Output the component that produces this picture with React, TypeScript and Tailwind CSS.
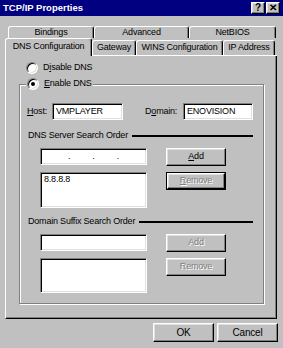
import type { ReactNode } from "react";

const raised =
  "border border-t-white border-l-white border-r-black border-b-black shadow-[inset_-1px_-1px_0_#808080,inset_1px_1px_0_#dfdfdf]";
const sunken =
  "border border-t-[#808080] border-l-[#808080] border-r-white border-b-white shadow-[inset_1px_1px_0_#000,inset_-1px_-1px_0_#dfdfdf] bg-white";
const disabledText = "text-[#808080] [text-shadow:1px_1px_0_#fff]";

function Btn({
  children,
  disabled,
  isDefault,
  className = "",
}: {
  children: ReactNode;
  disabled?: boolean;
  isDefault?: boolean;
  className?: string;
}) {
  const inner = (
    <div
      className={`flex h-full w-full items-center justify-center ${raised} ${
        disabled ? disabledText : ""
      }`}
    >
      {children}
    </div>
  );
  if (isDefault) {
    return <div className={`border border-black ${className}`}>{inner}</div>;
  }
  return <div className={className}>{inner}</div>;
}

function Radio({ checked }: { checked?: boolean }) {
  return (
    <div className="flex h-[12px] w-[12px] items-center justify-center rounded-full border border-t-[#808080] border-l-[#808080] border-r-white border-b-white bg-white shadow-[inset_1px_1px_0_#000,inset_-1px_-1px_0_#dfdfdf]">
      {checked ? <div className="h-[4px] w-[4px] rounded-full bg-black" /> : null}
    </div>
  );
}

function Tab({
  label,
  width,
  selected,
  back,
}: {
  label: string;
  width: string;
  selected?: boolean;
  back?: boolean;
}) {
  const base =
    "flex items-center justify-center rounded-t-[3px] border-l border-t border-r border-l-white border-t-white border-r-black shadow-[inset_-1px_0_0_#808080]";
  if (back) {
    return <div className={`${base} ${width} h-[12px] pt-[1px]`}>{label}</div>;
  }
  if (selected) {
    return <div className={`${base} ${width} h-[18px] pb-[2px]`}>{label}</div>;
  }
  return (
    <div className={`flex ${width} h-[16px] flex-col`}>
      <div className={`${base} flex-1`}>{label}</div>
      <div className="h-[1px] bg-white" />
    </div>
  );
}

function SectionLabel({ text }: { text: string }) {
  return (
    <div className="ml-[8px] mr-[10px] flex h-[12px] items-center">
      <span>{text}</span>
      <div className="ml-[4px] h-[2px] flex-1 bg-black" />
    </div>
  );
}

export default function App() {
  return (
    <div className="flex h-[348px] w-[283px] flex-col overflow-hidden bg-[#c0c0c0] font-['Liberation_Sans',Arial,sans-serif] text-[9px] tracking-[-0.2px] text-black">
      {/* title bar */}
      <div className="flex h-[16px] items-center justify-between bg-[#000080] pl-[3px] pr-[3px]">
        <span className="text-[9.5px] font-bold tracking-normal text-white">
          TCP/IP Properties
        </span>
        <div className="flex gap-[1px]">
          <div className={`flex h-[12px] w-[14px] items-center justify-center bg-[#c0c0c0] text-[10px] font-bold leading-none ${raised}`}>
            ?
          </div>
          <div className={`flex h-[12px] w-[14px] items-center justify-center bg-[#c0c0c0] text-[10px] font-bold leading-none ${raised}`}>
            ✕
          </div>
        </div>
      </div>

      {/* tabs */}
      <div className="ml-[5px] mt-[10px] w-[272px]">
        <div className="flex pl-[3px]">
          <Tab back label="Bindings" width="w-[86px]" />
          <Tab back label="Advanced" width="w-[95px]" />
          <Tab back label="NetBIOS" width="w-[87px]" />
        </div>
        <div className="flex items-end">
          <Tab selected label="DNS Configuration" width="w-[87px]" />
          <Tab label="Gateway" width="w-[44px]" />
          <Tab label="WINS Configuration" width="w-[87px]" />
          <Tab label="IP Address" width="w-[52px]" />
          <div className="h-[1px] flex-1 bg-white" />
        </div>

        {/* panel */}
        <div className="flex h-[263px] flex-col border-b border-l border-r border-b-black border-l-white border-r-black shadow-[inset_-1px_-1px_0_#808080]">
          <div className="mt-[6px] flex h-[12px] items-center gap-[5px] pl-[20px]">
            <Radio />
            <span>
              D<span className="underline">i</span>sable DNS
            </span>
          </div>

          <div className="ml-[13px] mt-[10px] flex w-[245px] flex-col border border-[#808080] shadow-[inset_1px_1px_0_#fff,1px_1px_0_#fff]">
            <div className="ml-[6px] mt-[-7px] flex h-[12px] w-fit items-center gap-[5px] bg-[#c0c0c0] px-[1px]">
              <Radio checked />
              <span>
                <span className="underline">E</span>nable DNS
              </span>
            </div>

            <div className="ml-[7px] mt-[13px] flex h-[17px] items-center">
              <span className="w-[25px]">
                <span className="underline">H</span>ost:
              </span>
              <div className={`flex h-[17px] w-[71px] items-center pl-[3px] ${sunken}`}>
                VMPLAYER
              </div>
              <span className="ml-[22px] w-[38px]">
                D<span className="underline">o</span>main:
              </span>
              <div className={`flex h-[17px] w-[70px] items-center pl-[3px] ${sunken}`}>
                ENOVISION
              </div>
            </div>

            <div className="mt-[10px]">
              <SectionLabel text="DNS Server Search Order" />
            </div>

            <div className="ml-[20px] mt-[6px] flex">
              <div className="flex w-[107px] flex-col">
                <div className={`flex h-[17px] items-center justify-around px-[16px] ${sunken}`}>
                  <span>.</span>
                  <span>.</span>
                  <span>.</span>
                </div>
                <div className={`mt-[7px] h-[36px] px-[3px] pt-[1px] leading-[11px] ${sunken}`}>
                  8.8.8.8
                </div>
              </div>
              <div className="ml-[19px] flex w-[60px] flex-col gap-[6px]">
                <Btn className="h-[18px]">
                  <span>
                    <span className="underline">A</span>dd
                  </span>
                </Btn>
                <Btn isDefault disabled className="h-[18px]">
                  <span>
                    <span className="underline">R</span>emove
                  </span>
                </Btn>
              </div>
            </div>

            <div className="mt-[8px]">
              <SectionLabel text="Domain Suffix Search Order" />
            </div>

            <div className="mb-[10px] ml-[20px] mt-[6px] flex">
              <div className="flex w-[107px] flex-col">
                <div className={`h-[17px] ${sunken}`} />
                <div className={`mt-[7px] h-[35px] ${sunken}`} />
              </div>
              <div className="ml-[19px] flex w-[60px] flex-col gap-[6px]">
                <Btn disabled className="h-[18px]">
                  Add
                </Btn>
                <Btn disabled className="h-[18px]">
                  Remove
                </Btn>
              </div>
            </div>
          </div>
        </div>
      </div>

      {/* dialog buttons */}
      <div className="mt-[4px] flex justify-end gap-[3px] pr-[5px] text-[10px]">
        <Btn className="h-[19px] w-[61px]">OK</Btn>
        <Btn className="h-[19px] w-[61px]">Cancel</Btn>
      </div>
    </div>
  );
}
